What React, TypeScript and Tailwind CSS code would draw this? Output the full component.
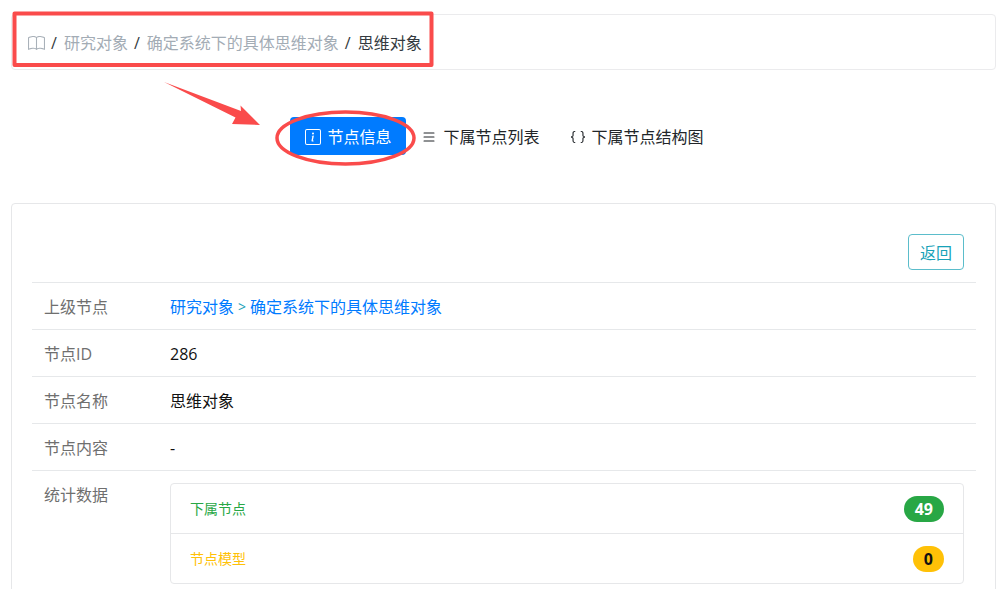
import type { ReactNode } from 'react';
import { BsBook, BsBraces, BsInfoSquare, BsList } from 'react-icons/bs';

const trail = ['研究对象', '确定系统下的具体思维对象'];

const tabs = [
  { id: 'info', label: '节点信息', icon: BsInfoSquare },
  { id: 'children', label: '下属节点列表', icon: BsList },
  { id: 'graph', label: '下属节点结构图', icon: BsBraces },
];

const stats = [
  { label: '下属节点', count: 49, text: 'text-[#28a745]', badge: 'bg-[#28a745] text-white' },
  { label: '节点模型', count: 0, text: 'text-[#ffc107]', badge: 'bg-[#ffc107] text-[#111]' },
];

function Breadcrumb() {
  return (
    <nav aria-label="breadcrumb" className="rounded border border-[#ebebed] px-4 pt-4 pb-[14px]">
      <ol className="flex items-center gap-[6px] text-[#343a40]">
        <li>
          <a href="#" aria-label="首页" className="block text-[#a9b1b9]">
            <BsBook className="size-[17px]" />
          </a>
        </li>
        {trail.map((name) => (
          <li key={name} className="flex gap-[7px]">
            <span>/</span>
            <a href="#" className="text-[#a3acb5]">{name}</a>
          </li>
        ))}
        <li className="flex gap-[7px]">
          <span>/</span>
          <span>思维对象</span>
        </li>
      </ol>
    </nav>
  );
}

function Row({ label, children }: { label: string; children: ReactNode }) {
  return (
    <tr className="border-t border-[#e6e8ea]">
      <th scope="row" className="w-[126px] px-3 pt-3 pb-[10px] text-left align-top font-normal text-[#6f6f6f]">
        {label}
      </th>
      <td className="px-3 pt-3 pb-[10px] text-[#111]">{children}</td>
    </tr>
  );
}

export default function App() {
  return (
    <div className="relative h-screen overflow-hidden bg-white pt-[14px] pr-1 pl-[11px] font-['Open_Sans','Noto_Sans_CJK_SC',sans-serif] text-[16px] leading-6">
      <Breadcrumb />

      <div role="tablist" className="mt-[47px] flex justify-center pl-[2px] text-[#212529]">
        {tabs.map(({ id, label, icon: Icon }) => (
          <button
            key={id}
            type="button"
            role="tab"
            aria-selected={id === 'info'}
            className="flex items-center gap-[6px] rounded px-[15px] pt-2 pb-[6px] aria-selected:bg-[#007bff] aria-selected:text-white"
          >
            <Icon className="size-4" />
            {label}
          </button>
        ))}
      </div>

      <main className="mt-12 rounded border border-[#e6e7e9] pt-[30px] pr-[19px] pb-5 pl-5">
        <div className="flex justify-end pr-3 pb-3">
          <button type="button" className="rounded border border-[#5bbdcb] px-[11px] pt-[6px] pb-1 text-[#17a2b8]">
            返回
          </button>
        </div>

        <table className="w-full border-collapse">
          <tbody>
            <Row label="上级节点">
              <span className="flex gap-1 text-[#007bff]">
                <a href="#">研究对象</a>
                <span className="text-[14px] text-[#17a2b8]">&gt;</span>
                <a href="#">确定系统下的具体思维对象</a>
              </span>
            </Row>
            <Row label="节点ID">286</Row>
            <Row label="节点名称">思维对象</Row>
            <Row label="节点内容">-</Row>
            <Row label="统计数据">
              <ul className="divide-y divide-[#e6e7e9] rounded border border-[#e6e7e9] text-[14px]">
                {stats.map((s) => (
                  <li key={s.label} className="flex items-center justify-between px-[19px] pt-3 pb-[11px]">
                    <a href="#" className={s.text}>{s.label}</a>
                    <span className={`rounded-full px-[11px] text-[16px] leading-[26px] font-bold ${s.badge}`}>
                      {s.count}
                    </span>
                  </li>
                ))}
              </ul>
            </Row>
          </tbody>
        </table>
      </main>

      {/* red markers: box around the breadcrumb, arrow and ring on the active tab */}
      <svg className="pointer-events-none absolute top-0 left-0" width="440" height="175" fill="none" aria-hidden="true">
        <rect x="14.5" y="13.5" width="417" height="51.5" stroke="#fa4b4b" strokeWidth="4" strokeLinejoin="round" />
        <path d="M164 82 L241 111 L240.5 105.5 L260 125 L232 124 L235.5 117.5 Z" fill="#fa4b4b" />
        <ellipse cx="345.5" cy="138" rx="68.5" ry="26" stroke="#fa4b4b" strokeWidth="3.5" />
      </svg>
    </div>
  );
}
